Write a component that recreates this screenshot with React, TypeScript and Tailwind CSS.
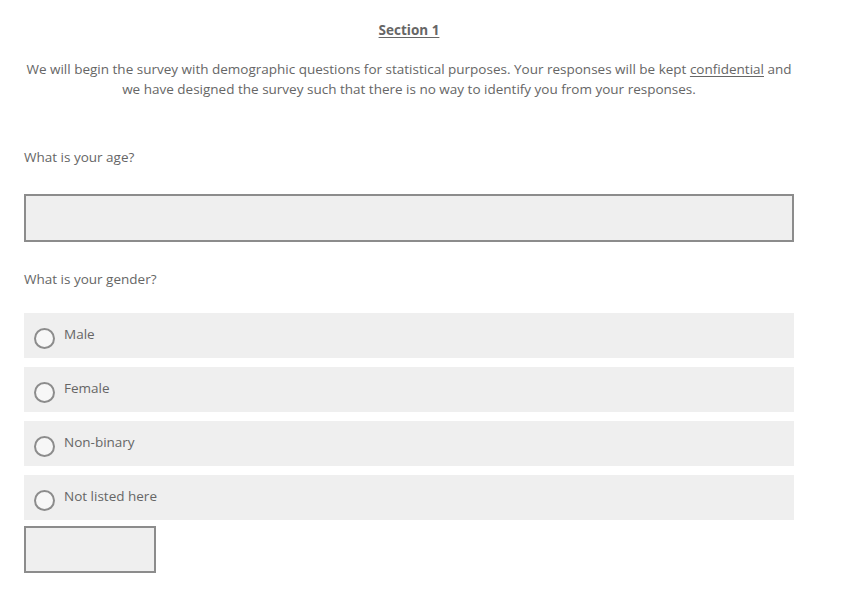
import React from 'react';

const options = ['Male', 'Female', 'Non-binary', 'Not listed here'];

function Radio() {
  return (
    <span className="mt-[8px] block h-[21px] w-[21px] shrink-0 rounded-full border-2 border-[#8c8c8c] bg-[#f7f7f7]" />
  );
}

export default function App() {
  return (
    <div
      className="min-h-screen bg-white text-[#666666]"
      style={{ fontFamily: '"Open Sans", "Noto Sans", sans-serif' }}
    >
      <div className="ml-6 w-[770px] pt-[20px]">
        <h2 className="text-center text-[13.5px] font-bold leading-[20px] underline underline-offset-2">
          Section 1
        </h2>

        <p className="mt-[19px] text-center text-[13.5px] leading-[20px]">
          We will begin the survey with demographic questions for statistical purposes. Your responses will be kept{' '}
          <span className="underline underline-offset-2">confidential</span> and we have designed the survey such that
          there is no way to identify you from your responses.
        </p>

        {/* Age */}
        <p className="mt-[48px] text-[13.5px] leading-[20px]">What is your age?</p>
        <input
          type="text"
          className="mt-[27px] block h-[48px] w-full border-2 border-[#8c8c8c] bg-[#efefef] outline-none"
        />

        {/* Gender */}
        <p className="mt-[27px] text-[13.5px] leading-[20px]">What is your gender?</p>
        <div className="mt-[24px] flex flex-col gap-[9px]">
          {options.map((opt) => (
            <label key={opt} className="flex h-[45px] items-start gap-[9px] bg-[#efefef] pl-[10px] pt-[7px]">
              <Radio />
              <span className="text-[13.5px] leading-[28px]">{opt}</span>
            </label>
          ))}
        </div>
        <input
          type="text"
          className="mt-[6px] block h-[47px] w-[132px] border-2 border-[#8c8c8c] bg-[#efefef] outline-none"
        />
      </div>
    </div>
  );
}
